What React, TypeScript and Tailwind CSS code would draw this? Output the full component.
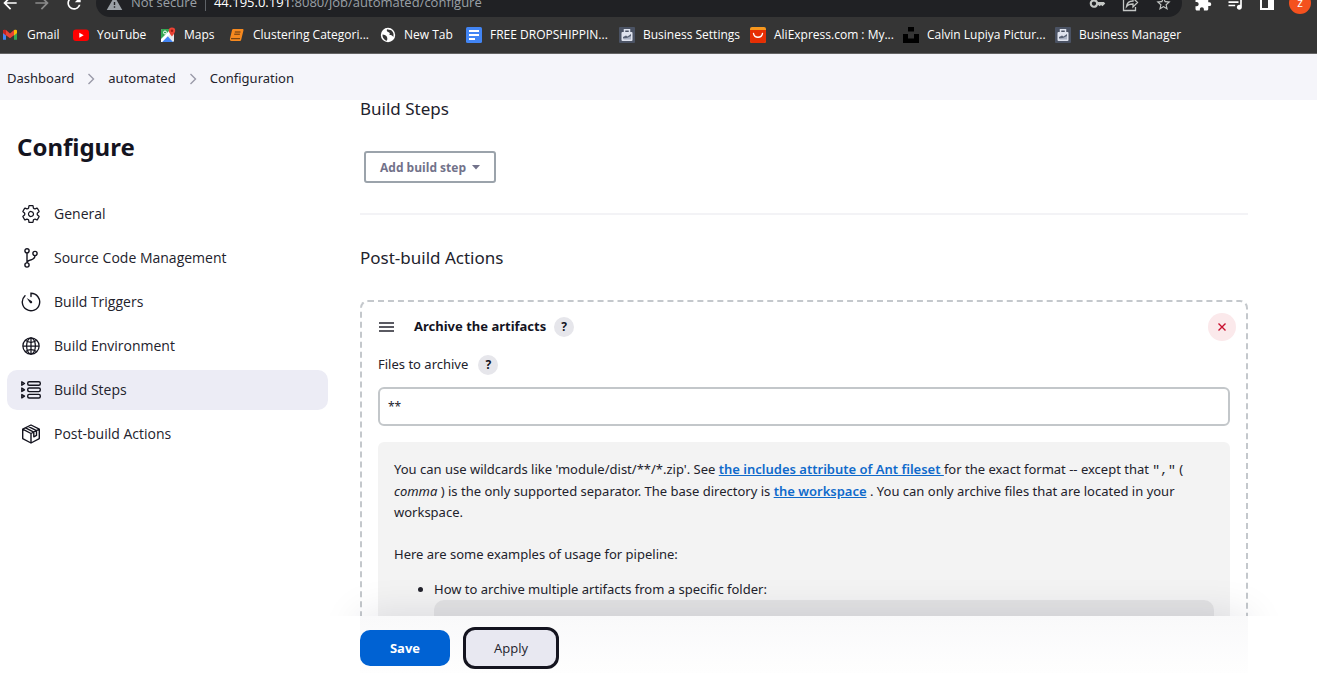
import React from "react";
import { MdKey, MdExtension, MdQueueMusic, MdStarBorder, MdWarning, MdArrowBack, MdArrowForward, MdRefresh } from "react-icons/md";
import { IoSettingsOutline, IoGlobeOutline } from "react-icons/io5";

function GmailIcon() {
  return (
    <svg width="16" height="16" viewBox="0 0 16 16">
      <path d="M0 3.500v9.300h3V7z" fill="#4285f4" />
      <path d="M11 7v5.800h3V3.500z" fill="#34a853" />
      <path d="M0 3.200 3 3l4 3.400L11 3l3 .2V6l-7 5.200L0 6z" fill="#ea4335" />
      <path d="M11 3.200c1.500-1 3-.4 3 1V6l-3 2.400z" fill="#fbbc04" />
      <path d="M0 4.200c0-1.400 1.600-2 3-1v5.200L0 6z" fill="#c5221f" />
    </svg>
  );
}
function YouTubeIcon() {
  return (
    <svg width="16" height="16" viewBox="0 0 16 16">
      <rect y="2.500" width="16" height="11.500" rx="3" fill="#f00" />
      <path d="M6.300 5.800v5l4.400-2.500z" fill="#fff" />
    </svg>
  );
}
function MapsIcon() {
  return (
    <svg width="16" height="16" viewBox="0 0 16 16">
      <rect x="1" y="2" width="13" height="13" rx="1.500" fill="#e8eaed" />
      <path d="M1 3.500V13L12 2H2.500C1.600 2 1 2.600 1 3.500z" fill="#34a853" />
      <path d="m2 15 5.500-6 5.500 6z" fill="#4285f4" />
      <path d="m1 12 8-8 2 2-9 9H1z" fill="#fff" />
      <circle cx="5" cy="5.500" r="1.500" fill="none" stroke="#fff" />
      <path d="M12 .5a3.200 3.200 0 0 0-3.200 3.300C8.800 6 12 9.500 12 9.500S15.200 6 15.200 3.800A3.200 3.200 0 0 0 12 .5z" fill="#ea4335" />
      <circle cx="12" cy="3.700" r="1.200" fill="#9c1d14" />
    </svg>
  );
}
function BookIcon() {
  return (
    <svg width="16" height="16" viewBox="0 0 16 16">
      <path d="M4.500 2h9c.8 0 1.200.6 1 1.300l-2.300 9.400c-.2.800-.8 1.300-1.500 1.300H2.500C1 14 .7 12.700 1 11.500L3 3.300C3.200 2.500 3.700 2 4.500 2z" fill="#f6891f" />
      <path d="M5.800 5h5.700M5.200 7.200h5.700M2 11.700h9" stroke="#5a3510" strokeWidth="1" />
    </svg>
  );
}
function GlobeSolidIcon() {
  return (
    <svg width="16" height="16" viewBox="0 0 16 16">
      <circle cx="8" cy="8" r="7.200" fill="#fff" />
      <path d="M2.500 7.500c2 .2 4 1 4.500 2.500.4 1.400.6 2.600-.2 3.700-2.500-.6-4.500-3-4.300-6.200zM7 2.300c-.7 1.500.3 2.600 1.600 3 1.500.4 1.500 2 .7 2.800 1.700-.2 3 .3 4 1.800.7-2.200.2-5-2-6.600z" fill="#353535" />
    </svg>
  );
}
function DocIcon() {
  return (
    <svg width="16" height="16" viewBox="0 0 16 16">
      <rect width="16" height="16" rx="1.500" fill="#4285f4" />
      <path d="M3 4h10M3 8h10M3 12h6" stroke="#fff" strokeWidth="1.800" />
    </svg>
  );
}
function BriefcaseIcon() {
  return (
    <svg width="16" height="16" viewBox="0 0 16 16">
      <rect width="16" height="16" rx="1" fill="#4b5364" />
      <path d="M5.500 6V2.800h5V6" fill="none" stroke="#dfe3ee" strokeWidth="1.500" />
      <rect x="2.500" y="5" width="11" height="9" rx="1" fill="#dfe3ee" />
      <path d="m4 10 3-1.500 1.500 1L12 7v4.500H4z" fill="#5a6376" />
      <path d="m4 12.500 4-1.500 4-2v3.500z" fill="#aab2c4" />
    </svg>
  );
}
function AliIcon() {
  return (
    <svg width="16" height="16" viewBox="0 0 16 16">
      <rect width="16" height="16" rx="2" fill="#f7971d" />
      <path d="M0 3h16v11a2 2 0 0 1-2 2H2a2 2 0 0 1-2-2z" fill="#e62e04" />
      <path d="M3.500 6.500c1 5 8 5 9 0" fill="none" stroke="#fff" strokeWidth="1.300" strokeLinecap="round" />
    </svg>
  );
}
function UnsplashIcon() {
  return (
    <svg width="16" height="16" viewBox="0 0 16 16">
      <path d="M5 0h6v4.500H5zM0 7h5v4.500h6V7h5v9H0z" fill="#000" />
    </svg>
  );
}

const bookmarks = [
  { label: "Gmail", icon: <GmailIcon /> },
  { label: "YouTube", icon: <YouTubeIcon /> },
  { label: "Maps", icon: <MapsIcon /> },
  { label: "Clustering Categori...", icon: <BookIcon /> },
  { label: "New Tab", icon: <GlobeSolidIcon /> },
  { label: "FREE DROPSHIPPIN...", icon: <DocIcon /> },
  { label: "Business Settings", icon: <BriefcaseIcon /> },
  { label: "AliExpress.com : My...", icon: <AliIcon /> },
  { label: "Calvin Lupiya Pictur...", icon: <UnsplashIcon /> },
  { label: "Business Manager", icon: <BriefcaseIcon /> },
];

function ShareIcon() {
  return (
    <svg width="17" height="17" viewBox="0 0 17 17" fill="none" stroke="currentColor" strokeWidth="1.300">
      <path d="M6 2.500H1.500v13h12V12M4.500 11.500C5 7.500 7.500 6 11 6V3l4.500 4.500L11 12V9C8 9 6 9.500 4.500 11.500z" />
    </svg>
  );
}

function BrowserChrome() {
  return (
    <header className="shrink-0 border-b border-[#646464] bg-[#353535] font-['Open_Sans',sans-serif] text-white">
      <div className="flex h-[17px] items-end overflow-hidden">
        <div className="flex h-7 w-24 shrink-0 items-center gap-3">
          <button aria-label="Back"><MdArrowBack size={20} /></button>
          <button aria-label="Forward" className="text-[#8a8a8a]"><MdArrowForward size={20} /></button>
          <button aria-label="Reload"><MdRefresh size={20} /></button>
        </div>
        <div className="flex h-7 flex-1 items-center rounded-full bg-[#202124] pr-2.5 pl-2.5 text-[13px] text-[#9aa0a6]">
          <MdWarning size={17} className="mr-2" />
          <span>Not secure</span>
          <span className="mx-2 h-4 w-px bg-[#5f6368]" />
          <span className="flex-1"><span className="text-white">44.195.0.191</span>:8080/job/automated/configure</span>
          <div className="flex items-center gap-4 text-[#c4c7c5]">
            <button aria-label="Passwords"><MdKey size={17} /></button>
            <button aria-label="Share"><ShareIcon /></button>
            <button aria-label="Bookmark this tab"><MdStarBorder size={17} /></button>
          </div>
        </div>
        <div className="flex h-7 w-[135px] shrink-0 items-center justify-between pr-1.5 pl-3">
          <button aria-label="Extensions"><MdExtension size={18} /></button>
          <button aria-label="Media"><MdQueueMusic size={20} /></button>
          <button aria-label="Side panel"><svg width="16" height="16" viewBox="0 0 16 16"><path d="M2 2h12v12H2z" fill="none" stroke="#fff" strokeWidth="2" /><path d="M9 1h6v14H9z" fill="#fff" /></svg></button>
          <button aria-label="Profile" className="size-[22px] rounded-full bg-[#f4511e] text-xs">z</button>
        </div>
      </div>
      <nav aria-label="Bookmarks" className="grid h-9 grid-cols-[70px_87px_69px_151px_86px_153px_131px_153px_152px_1fr] items-center pl-[3px] text-xs">
        {bookmarks.map((b) => (
          <a key={b.label} href="#" className="flex items-center gap-2 whitespace-nowrap"><span className="shrink-0">{b.icon}</span>{b.label}</a>
        ))}
      </nav>
    </header>
  );
}

function BranchIcon() {
  return (
    <svg width="20" height="20" viewBox="0 0 20 20" fill="none" stroke="currentColor" strokeWidth="1.400">
      <circle cx="6" cy="2.800" r="2.100" /><circle cx="6" cy="17" r="2.100" /><circle cx="14" cy="5.500" r="2.100" />
      <path d="M6 5v10M14 7.600c0 3.600-2.500 3.900-5 4.600-1.700.5-3 1-3 2.800" />
    </svg>
  );
}
function TimerIcon() {
  return (
    <svg width="20" height="20" viewBox="0 0 20 20" fill="none" stroke="currentColor" strokeWidth="1.400" strokeLinecap="round">
      <path d="M10 4.500V1.300a8.700 8.700 0 1 1-6 2.400" />
      <path d="m5.700 6 3.200 4.800c.5.700 1.500.7 2 .1.500-.6.400-1.500-.3-2z" fill="currentColor" stroke="none" />
    </svg>
  );
}
function StepsIcon() {
  return (
    <svg width="20" height="20" viewBox="0 0 20 20" fill="none" stroke="currentColor" strokeWidth="1.400" strokeLinejoin="round">
      <rect x="6.700" y="1.700" width="12.600" height="3.600" rx="1.500" /><rect x="6.700" y="8" width="12.600" height="3.600" rx="1.500" /><rect x="6.700" y="14.400" width="12.600" height="3.600" rx="1.500" />
      <path d="M.8 1.800v3.400l2.700-1.700zM.8 8.100v3.400l2.700-1.700zM.8 14.500v3.400l2.700-1.700z" />
    </svg>
  );
}
function PackageIcon() {
  return (
    <svg width="20" height="20" viewBox="0 0 20 20" fill="none" stroke="currentColor" strokeWidth="1.400" strokeLinejoin="round">
      <path d="m10 1 8.300 4.200v9.400L10 19l-8.300-4.400V5.200zM1.700 5.200 10 9.500l8.300-4.300M10 9.500V19M4.500 3.800l8.300 4.300M7.200 2.400l8.300 4.300M12.800 8.100v4.700l2.700-1.400V6.700" />
    </svg>
  );
}

const sections = [
  { label: "General", icon: <IoSettingsOutline size={20} /> },
  { label: "Source Code Management", icon: <BranchIcon /> },
  { label: "Build Triggers", icon: <TimerIcon /> },
  { label: "Build Environment", icon: <IoGlobeOutline size={20} /> },
  { label: "Build Steps", icon: <StepsIcon />, active: true },
  { label: "Post-build Actions", icon: <PackageIcon /> },
];

function Chevron() {
  return (
    <svg width="8" height="12" viewBox="0 0 8 12" fill="none" stroke="#9a9aa8" strokeWidth="1.400"><path d="m1.500 1 5 5-5 5" /></svg>
  );
}
function Help({ label }: { label: string }) {
  return <button aria-label={label} className="size-5 rounded-full bg-[#e6e6eb] text-xs leading-5 font-bold text-[#14141f]">?</button>;
}

export default function App() {
  return (
    <div className="flex h-screen flex-col overflow-hidden bg-white font-['Noto_Sans','Open_Sans',sans-serif] text-[#22222c]">
      <BrowserChrome />
      <nav aria-label="Breadcrumb" className="flex h-[46px] shrink-0 items-center gap-[13px] bg-[#f5f5fa] pt-1 pl-[7px] text-[13px]">
        <a href="#">Dashboard</a><Chevron /><a href="#">automated</a><Chevron /><a href="#">Configuration</a>
      </nav>
      <div className="flex min-h-0 flex-1">
        <aside className="w-[328px] shrink-0 pt-[29px] pl-[7px]">
          <h1 className="pl-2.5 text-2xl leading-9 font-bold text-[#14141f]">Configure</h1>
          <nav aria-label="Sections" className="mt-[29px] flex flex-col gap-1 font-['Open_Sans',sans-serif] text-sm">
            {sections.map((s) => (
              <a key={s.label} href="#" className={s.active ? "flex h-10 items-center gap-[13px] rounded-[10px] bg-[#ececf5] px-3.5" : "flex h-10 items-center gap-[13px] rounded-[10px] px-3.5"}>
                <span className="text-[#14141f]">{s.icon}</span>
                <span>{s.label}</span>
              </a>
            ))}
          </nav>
        </aside>
        <main className="flex min-w-0 flex-1 flex-col pr-[69px] pl-8">
          <div className="min-h-0 flex-1 overflow-hidden">
            <h2 className="text-[17px] leading-[18px]">Build Steps</h2>
            <button className="mt-[33px] ml-1 flex h-8 w-[132px] items-center justify-center gap-1.5 rounded-[3px] border-2 border-[#9ba3ab] pt-px font-['Open_Sans',sans-serif] text-xs font-bold text-[#72728a]">
              Add build step
              <svg width="8" height="5" viewBox="0 0 8 5"><path d="M0 0h8L4 4.500z" fill="currentColor" /></svg>
            </button>
            <hr className="mt-[30px] border-t-2 border-[#f3f3f6]" />
            <h2 className="mt-[31px] text-[17px] leading-6">Post-build Actions</h2>
            <section className="mt-[30px] h-[420px] rounded-lg border-2 border-dashed border-[#c4c8cc] px-4 pt-[11px] text-[13px]">
              <div className="flex h-7 items-center">
                <svg width="18" height="12" viewBox="0 0 18 12"><path d="M1 2h15M1 6h15M1 10h15" stroke="#25252f" strokeWidth="1.500" /></svg>
                <h3 className="mr-2 ml-[18px] font-bold text-[#14141f]">Archive the artifacts</h3>
                <Help label="Help for Archive the artifacts" />
                <button aria-label="Delete" className="-mr-1.5 ml-auto flex size-7 items-center justify-center rounded-full bg-[#fbe9eb] text-[#c8102e]">
                  <svg width="8" height="8" viewBox="0 0 8 8" stroke="currentColor" strokeWidth="1.400"><path d="m.5.5 7 7m0-7-7 7" /></svg>
                </button>
              </div>
              <div className="mt-3.5 flex h-5 items-center gap-2.5">
                <label htmlFor="files">Files to archive</label>
                <Help label="Help for Files to archive" />
              </div>
              <input id="files" defaultValue="**" className="mt-3 h-[39px] w-full rounded-md border-2 border-[#c3c7ca] px-2 text-xs" />
              <div className="mt-4 h-80 rounded-md bg-[#f3f3f3] px-4 pt-[17px] leading-[21px]">
                <p>You can use wildcards like 'module/dist/**/*.zip'. See <a href="#" className="font-semibold text-[#0f6acb] underline">the includes attribute of Ant fileset </a>for the exact format -- except that <code className="font-['Liberation_Mono',monospace]">","</code> ( <i>comma</i> ) is the only supported separator. The base directory is <a href="#" className="font-semibold text-[#0f6acb] underline">the workspace</a> . You can only archive files that are located in your workspace.</p>
                <p className="mt-[21px]">Here are some examples of usage for pipeline:</p>
                <ul className="mt-3.5 list-disc pl-10">
                  <li>How to archive multiple artifacts from a specific folder:<pre className="h-20 rounded-[10px] bg-[#e3e3e4]" /></li>
                </ul>
              </div>
            </section>
          </div>
          <footer className="relative flex h-[57px] shrink-0 items-center gap-[13px] bg-linear-to-b from-[#f9f9fa] to-[#fefefe] pt-[7px] font-['Open_Sans',sans-serif] text-[13px]">
            <div className="pointer-events-none absolute -inset-x-8 bottom-full h-9 overflow-hidden px-8 pt-9">
              <div className="h-10 shadow-[0_0_40px_rgba(20,20,50,0.12)]" />
            </div>
            <button className="h-9 w-[90px] rounded-[10px] bg-[#0062d3] pt-0.5 font-bold text-white">Save</button>
            <button className="h-[42px] w-24 rounded-xl border-[3px] border-[#14141f] bg-[#e8e8f1] pt-0.5">Apply</button>
          </footer>
        </main>
      </div>
    </div>
  );
}
